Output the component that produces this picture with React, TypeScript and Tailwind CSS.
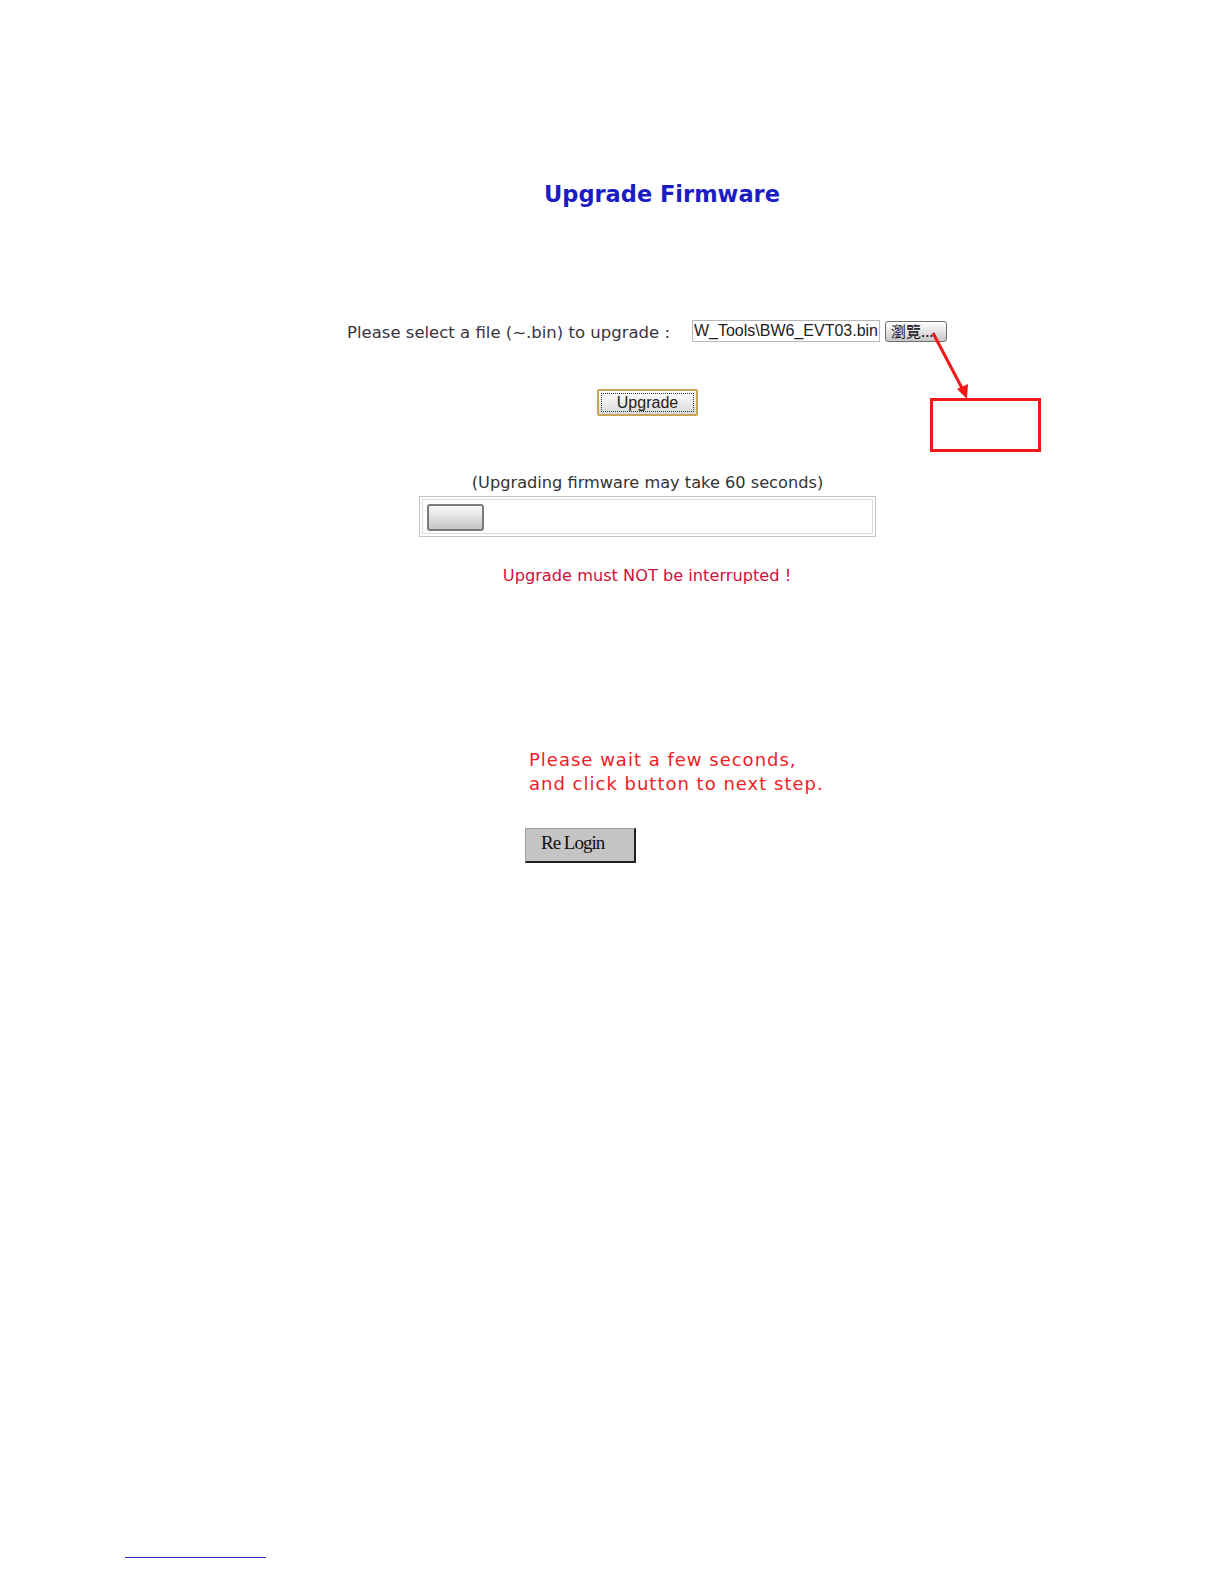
import React from "react";

const verdana = { fontFamily: '"DejaVu Sans", Verdana, sans-serif' };

export default function App() {
  return (
    <div className="relative w-[1224px] h-[1584px] bg-white overflow-hidden" style={verdana}>
      {/* title */}
      <div className="pt-[181px] pl-[100px] text-center">
        <h1 className="text-[22.5px] leading-[26px] font-bold text-[#1c1cc4]">Upgrade Firmware</h1>
      </div>

      {/* file select */}
      <div className="mt-[113px] flex items-center h-[22px] pl-[347px]">
        <span className="text-[16.5px] leading-[22px] text-[#3a3340] w-[345px] whitespace-nowrap pt-[3px]">
          Please select a file (~.bin) to upgrade :
        </span>
        <div className="w-[188px] h-[22px] border border-[#b8b8b8] bg-white flex justify-end items-center overflow-hidden">
          <span
            className="whitespace-nowrap text-[16px] text-[#222] pr-[1px]"
            style={{ fontFamily: '"Liberation Sans", Arial, sans-serif' }}
          >
            W_Tools\BW6_EVT03.bin
          </span>
        </div>
        <button
          className="ml-[5px] w-[62px] h-[21px] rounded-[3px] border border-[#707070] bg-gradient-to-b from-white to-[#c8c8c8] text-[15px] leading-[18px] text-[#111] text-left pl-[5px]"
          style={{ fontFamily: '"Noto Sans CJK TC", "Liberation Sans", sans-serif' }}
        >
          瀏覽...
        </button>
      </div>

      {/* upgrade button */}
      <div className="mt-[47px] pl-[597px]">
        <button className="w-[101px] h-[27px] border-2 border-[#c9a358] rounded-[2px] bg-gradient-to-b from-white to-[#dadada] p-[2px]">
          <div
            className="w-full h-full border border-dotted border-[#333] flex items-center justify-center text-[16px] text-[#222]"
            style={{ fontFamily: '"Liberation Sans", Arial, sans-serif' }}
          >
            Upgrade
          </div>
        </button>
      </div>

      {/* note */}
      <div className="mt-[57px] pl-[71px] text-center text-[16.2px] leading-[20px] text-[#333]">
        (Upgrading firmware may take 60 seconds)
      </div>

      {/* progress */}
      <div className="mt-[3px] pl-[419px]">
        <div className="w-[457px] h-[41px] border border-[#c4c4c4] p-[2px]">
          <div className="w-full h-full border border-[#dcdcdc] p-[4px]">
            <div className="w-[57px] h-[27px] rounded-[3px] border-2 border-[#7a7a7a] bg-gradient-to-b from-[#fafafa] to-[#c6c6c6]" />
          </div>
        </div>
      </div>

      {/* warning */}
      <div className="mt-[29px] pl-[70px] text-center text-[16.2px] leading-[20px] text-[#d0103a]">
        Upgrade must NOT be interrupted !
      </div>

      {/* wait text */}
      <div className="mt-[162px] pl-[529px] text-[18px] leading-[24px] text-[#ee1c24] tracking-[1px]">
        <div>Please wait a few seconds,</div>
        <div>and click button to next step.</div>
      </div>

      {/* re login */}
      <div className="mt-[32px] pl-[525px]">
        <button
          className="w-[111px] h-[35px] bg-[#c4c4c4] border-t border-l border-[#a0a0a0] border-r-2 border-b-2 border-r-[#222] border-b-[#222] text-[19px] tracking-[-1px] text-[#111] text-left pl-[15px] pb-[3px]"
          style={{ fontFamily: '"Liberation Serif", "Times New Roman", serif' }}
        >
          Re Login
        </button>
      </div>

      {/* footer rule */}
      <div className="mt-[694px] ml-[125px] w-[141px] h-px bg-[#3030c0]" />

      {/* annotation */}
      <svg className="absolute left-0 top-0 pointer-events-none" width="1224" height="1584">
        <line x1="933" y1="333" x2="963" y2="390" stroke="#f01818" strokeWidth="3" />
        <polygon points="967,399 957,389 968,384" fill="#f01818" />
      </svg>
      <div className="absolute left-[930px] top-[398px] w-[111px] h-[54px] border-[3px] border-[#f01818]" />
    </div>
  );
}
